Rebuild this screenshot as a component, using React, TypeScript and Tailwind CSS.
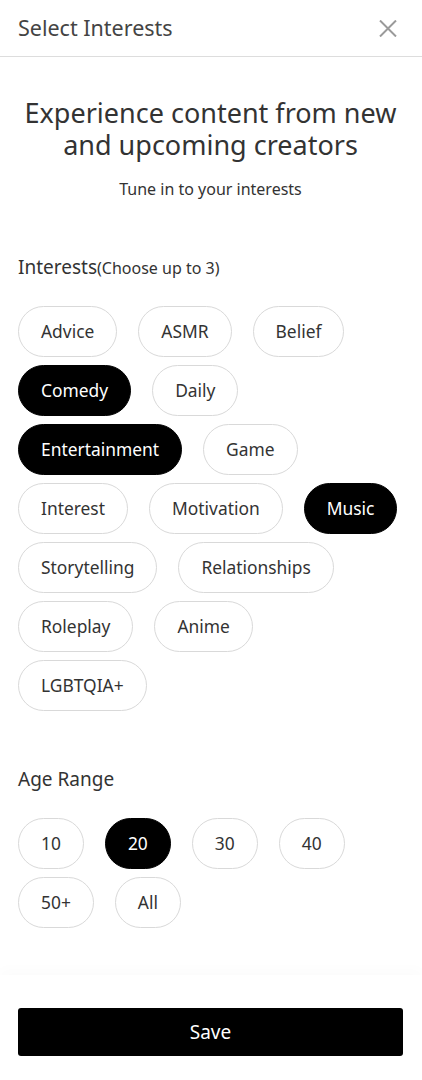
import React from "react";

const interests: { label: string; selected?: boolean }[] = [
  { label: "Advice" },
  { label: "ASMR" },
  { label: "Belief" },
  { label: "Comedy", selected: true },
  { label: "Daily" },
  { label: "Entertainment", selected: true },
  { label: "Game" },
  { label: "Interest" },
  { label: "Motivation" },
  { label: "Music", selected: true },
  { label: "Storytelling" },
  { label: "Relationships" },
  { label: "Roleplay" },
  { label: "Anime" },
  { label: "LGBTQIA+" },
];

const ages: { label: string; selected?: boolean }[] = [
  { label: "10" },
  { label: "20", selected: true },
  { label: "30" },
  { label: "40" },
  { label: "50+" },
  { label: "All" },
];

function Chip({ label, selected }: { label: string; selected?: boolean }) {
  return (
    <div
      className={
        selected
          ? "h-[51px] px-[22px] rounded-full bg-black text-white text-[17.4px] flex items-center border border-black"
          : "h-[51px] px-[22px] rounded-full bg-white text-[#333] text-[17.4px] flex items-center border border-[#d9d9d9]"
      }
    >
      {label}
    </div>
  );
}

export default function App() {
  return (
    <div
      className="w-[422px] h-[1080px] bg-white flex flex-col"
      style={{ fontFamily: '"Noto Sans", "Open Sans", sans-serif' }}
    >
      <div className="h-[57px] shrink-0 flex items-center justify-between pl-[18px] pr-[25px] border-b border-[#dddddd]">
        <span className="text-[21.5px] text-[#444] leading-none">Select Interests</span>
        <svg width="18" height="17" viewBox="0 0 18 17" className="mt-[1px]">
          <path d="M1 0.5 L17 16.5 M17 0.5 L1 16.5" stroke="#9a9a9a" strokeWidth="2" />
        </svg>
      </div>

      <div className="flex-1 flex flex-col pl-[18px] pr-[19px]">
        <h1 className="mt-[40px] text-center text-[27px] leading-[32px] text-[#333] font-normal">
          Experience content from new
          <br />
          and upcoming creators
        </h1>
        <p className="mt-[16px] text-center text-[16px] leading-[24px] text-[#333]">
          Tune in to your interests
        </p>

        <div className="mt-[52px] leading-[28px] text-[#333]">
          <span className="text-[19px]">Interests</span>
          <span className="text-[16px]">(Choose up to 3)</span>
        </div>

        <div className="mt-[24px] mr-[3px] flex flex-wrap gap-x-[21px] gap-y-[8px]">
          {interests.map((c) => (
            <Chip key={c.label} label={c.label} selected={c.selected} />
          ))}
        </div>

        <div className="mt-[54px] text-[19px] leading-[28px] text-[#333]">Age Range</div>

        <div className="mt-[25px] flex flex-wrap gap-x-[21px] gap-y-[8px]">
          {ages.map((c) => (
            <Chip key={c.label} label={c.label} selected={c.selected} />
          ))}
        </div>
      </div>

      <div className="shrink-0 pt-[33px] pb-[24px] px-[18px] bg-white shadow-[0_-6px_12px_rgba(0,0,0,0.015)]">
        <button className="w-[385px] h-[48px] rounded-[3px] bg-black text-white text-[19px] flex items-center justify-center">
          Save
        </button>
      </div>
    </div>
  );
}
